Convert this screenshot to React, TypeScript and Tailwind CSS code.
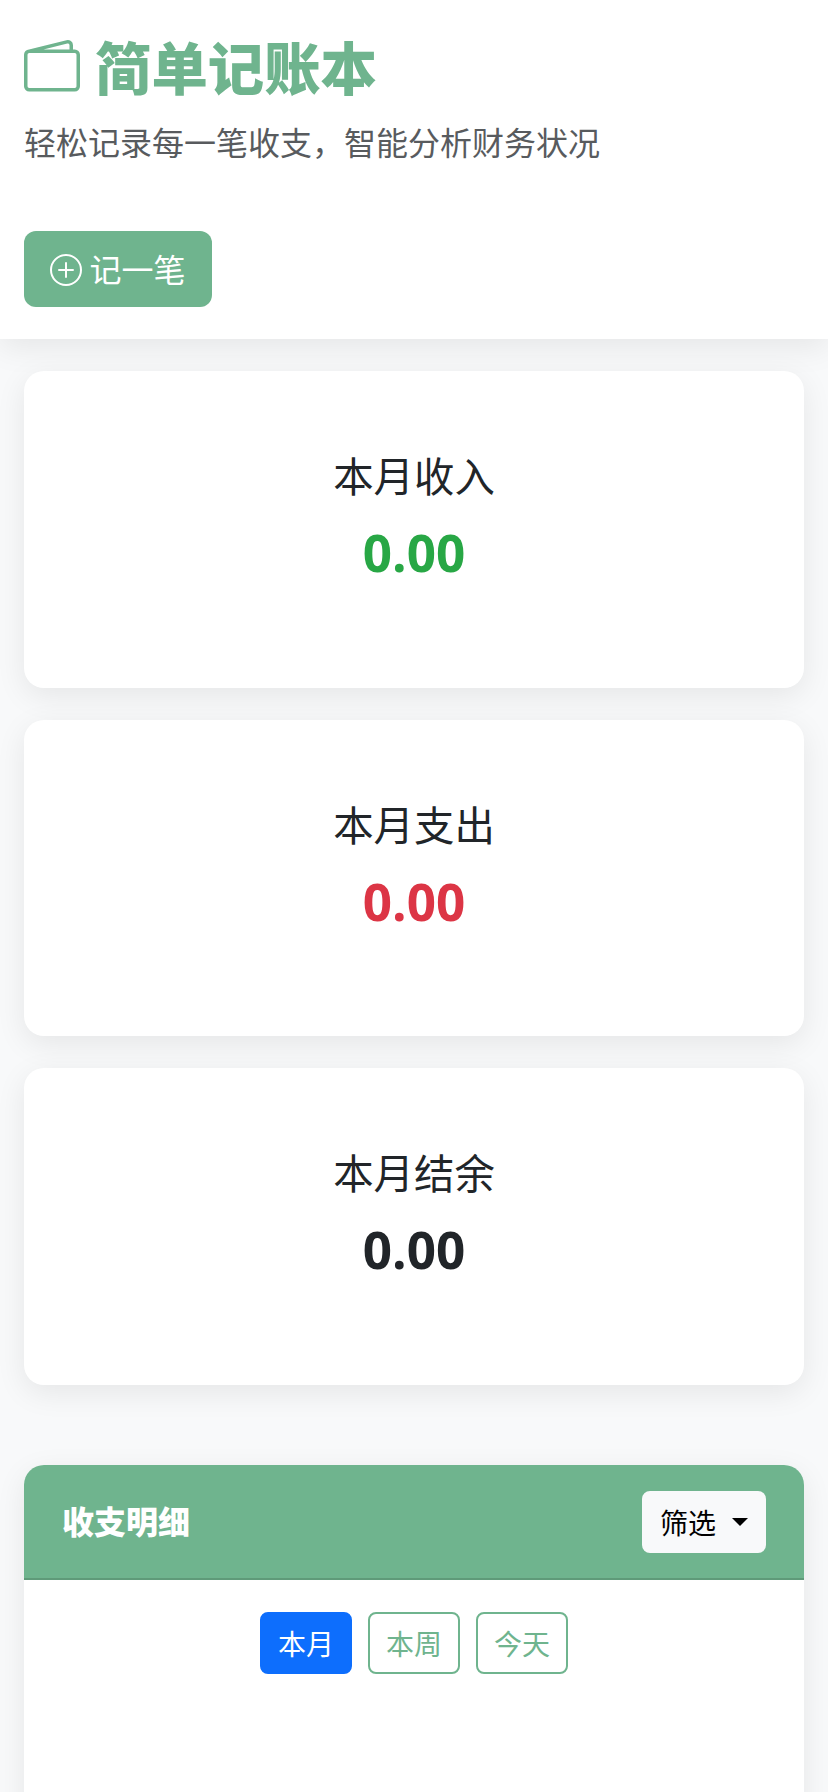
import React, { useState } from 'react';
import { BsPlusCircle, BsWallet2 } from 'react-icons/bs';

interface SummaryCardProps {
    title: string;
    amount: number;
    color: string;
}

const SummaryCard: React.FC<SummaryCardProps> = ({ title, amount, color }) => {
    return (
        <div className="h-[316.6px] rounded-[20px] bg-white pt-20 text-center shadow-[0_8px_30px_rgba(0,0,0,0.08)]">
            <h5 className="h-12 text-[40.4px] leading-[48px] text-[#212529]">
                {title}
            </h5>
            <p
                className={`mt-[15px] font-['Open_Sans'] text-[51.2px] leading-[77px] font-bold ${color}`}
            >
                {amount.toFixed(2)}
            </p>
        </div>
    );
};

const periods = ['本月', '本周', '今天'];

const App: React.FC = () => {
    const [period, setPeriod] = useState<string>('本月');

    return (
        <div className="h-[1792px] overflow-hidden bg-[#f8f9fa] font-['Noto_Sans_CJK_SC',sans-serif] text-[#212529]">
            <header className="h-[339px] bg-white px-6 pt-8 shadow-[0_8px_30px_rgba(0,0,0,0.08)]">
                <h1 className="flex h-[68px] items-center gap-[15px] text-[56.4px] leading-[68px] font-black text-[#6fb48e]">
                    <BsWallet2 className="mt-0.5 size-14" />
                    简单记账本
                </h1>
                <p className="mt-[17px] h-12 text-[32px] leading-[48px] text-[#585b5e]">
                    轻松记录每一笔收支，智能分析财务状况
                </p>
                <button className="mt-[66px] flex h-[76px] w-[188px] items-center justify-center gap-[7px] rounded-xl bg-[#6fb48e] text-[32px] leading-[48px] text-white">
                    <BsPlusCircle className="mt-0.5 size-8" />
                    <span className="-mt-0.5">记一笔</span>
                </button>
            </header>

            <main className="px-6 pt-8">
                <div className="flex flex-col gap-8">
                    <SummaryCard title="本月收入" amount={0} color="text-[#28a745]" />
                    <SummaryCard title="本月支出" amount={0} color="text-[#dc3545]" />
                    <SummaryCard title="本月结余" amount={0} color="text-[#212529]" />
                </div>

                <div className="mt-20 h-[600px] rounded-[20px] bg-white shadow-[0_8px_30px_rgba(0,0,0,0.08)]">
                    <div className="flex h-[115px] items-center justify-between rounded-t-[20px] border-b-2 border-[#5f9a79] bg-[#6fb48e] px-[38px] pt-px">
                        <h5 className="-mt-1 text-[32px] leading-[38px] font-black text-white">
                            收支明细
                        </h5>
                        <button className="flex h-[62px] w-[124px] items-center rounded-lg bg-[#f8f9fa] pl-[18px] text-[28px] leading-[42px] text-black">
                            筛选
                            <span className="ml-4 border-x-8 border-t-8 border-x-transparent border-t-black" />
                        </button>
                    </div>
                    <div className="flex justify-center gap-4 pt-8">
                        {periods.map((item) => (
                            <button
                                key={item}
                                onClick={() => setPeriod(item)}
                                className={`h-[62px] w-[92px] rounded-lg border-2 text-[28px] leading-[42px] ${
                                    item === period
                                        ? 'border-[#0d6efd] bg-[#0d6efd] text-white'
                                        : 'border-[#6fb48e] text-[#6fb48e]'
                                }`}
                            >
                                {item}
                            </button>
                        ))}
                    </div>
                </div>
            </main>
        </div>
    );
};

export default App;
